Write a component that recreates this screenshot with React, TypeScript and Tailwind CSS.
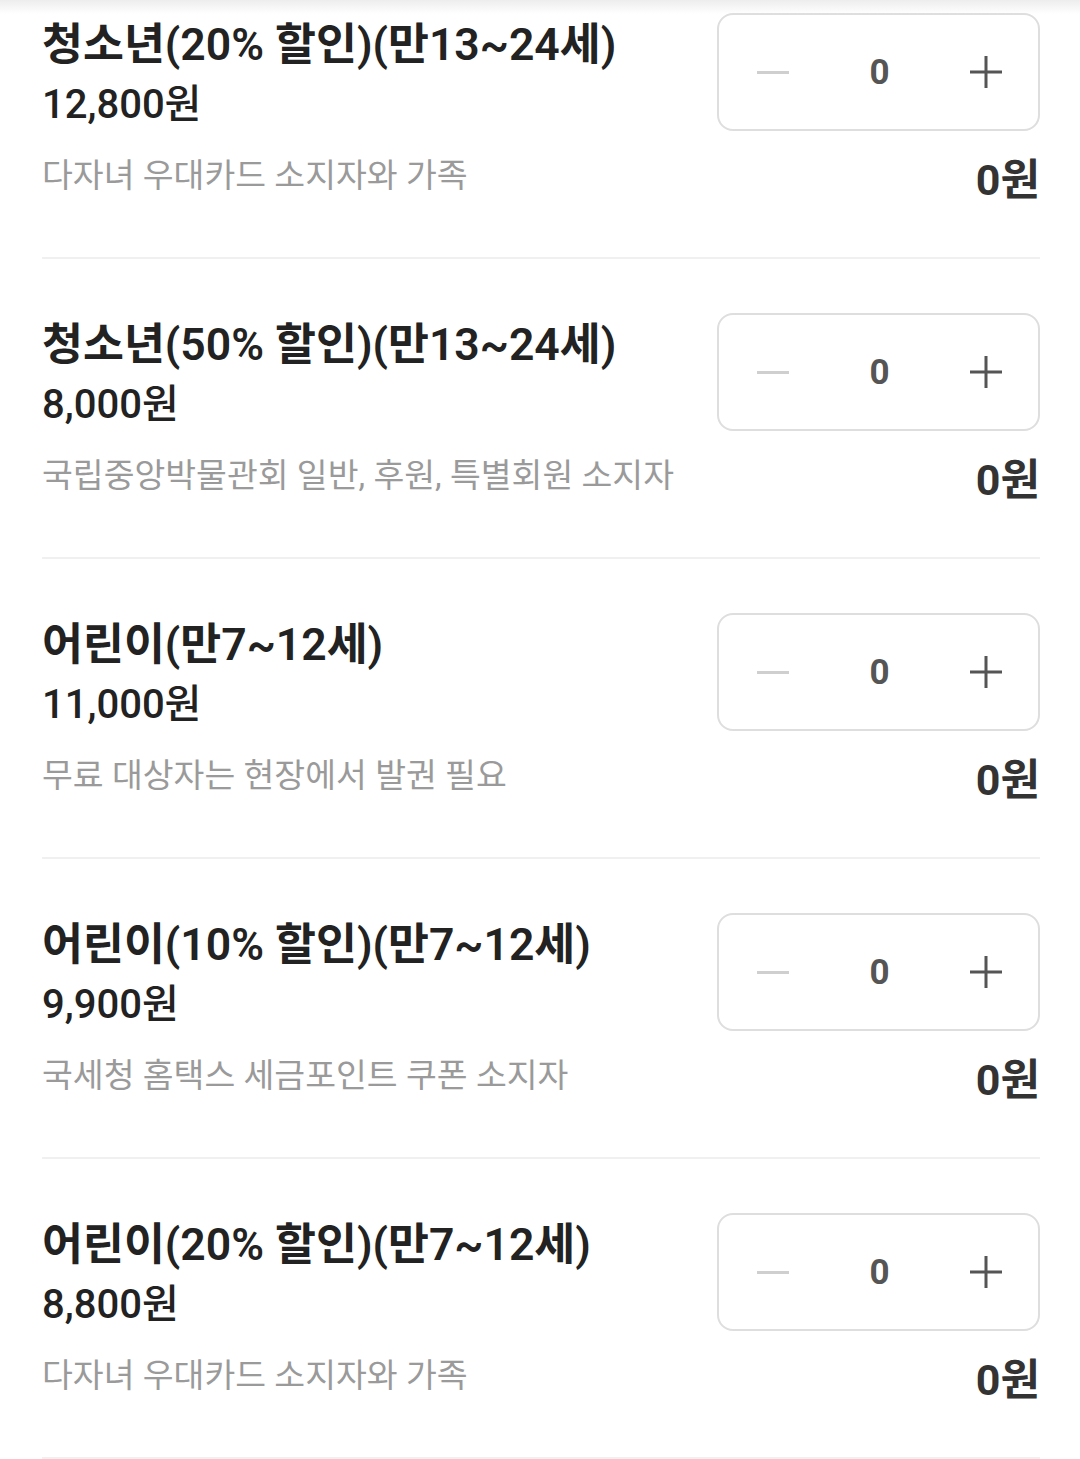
import { useState } from "react";

type Ticket = {
  name: string;
  price: string;
  note: string;
};

const tickets: Ticket[] = [
  { name: "청소년(20% 할인)(만13~24세)", price: "12,800원", note: "다자녀 우대카드 소지자와 가족" },
  { name: "청소년(50% 할인)(만13~24세)", price: "8,000원", note: "국립중앙박물관회 일반, 후원, 특별회원 소지자" },
  { name: "어린이(만7~12세)", price: "11,000원", note: "무료 대상자는 현장에서 발권 필요" },
  { name: "어린이(10% 할인)(만7~12세)", price: "9,900원", note: "국세청 홈택스 세금포인트 쿠폰 소지자" },
  { name: "어린이(20% 할인)(만7~12세)", price: "8,800원", note: "다자녀 우대카드 소지자와 가족" },
];

const Stepper = ({ value }: { value: number }) => (
  <div className="w-[323px] h-[118px] rounded-[16px] border-2 border-[#dedede] flex items-center justify-between pl-[38px] pr-[36px]">
    <span className="w-[32px] h-[3px] bg-[#cfcfcf]" />
    <span className="text-[35px] font-bold text-[#555555] leading-none">{value}</span>
    <svg width="32" height="32" viewBox="0 0 32 32" className="text-[#555555]">
      <path d="M16 0v32M0 16h32" stroke="currentColor" strokeWidth="3" />
    </svg>
  </div>
);

const TicketRow = ({ ticket }: { ticket: Ticket }) => {
  const [count] = useState(0);
  return (
    <div className="flex justify-between pt-[54px] pb-[47px] border-b-2 border-[#f0f0f0]">
      <div className="flex flex-col pt-[2px]">
        <div className="text-[44.5px] leading-[60px] font-semibold text-[#222222]">{ticket.name}</div>
        <div className="text-[40px] leading-[60px] font-medium text-[#222222]">{ticket.price}</div>
        <div className="mt-[11px] text-[33.5px] leading-[60px] text-[#9a9a9a]">{ticket.note}</div>
      </div>
      <div className="flex flex-col items-end">
        <Stepper value={count} />
        <div className="mt-[19px] text-[43px] leading-[60px] font-bold text-[#333333]">{count}원</div>
      </div>
    </div>
  );
};

export default function App() {
  return (
    <div
      className="relative w-[1080px] h-[1459px] overflow-hidden bg-white"
      style={{ fontFamily: "Roboto, 'Noto Sans CJK KR', sans-serif" }}
    >
      <div className="absolute top-0 left-0 right-0 h-[14px] bg-gradient-to-b from-[#ededed] to-white/0 z-10" />
      <div className="-mt-[41px] pl-[42px] pr-[40px]">
        {tickets.map((t, i) => (
          <TicketRow key={i} ticket={t} />
        ))}
      </div>
    </div>
  );
}
